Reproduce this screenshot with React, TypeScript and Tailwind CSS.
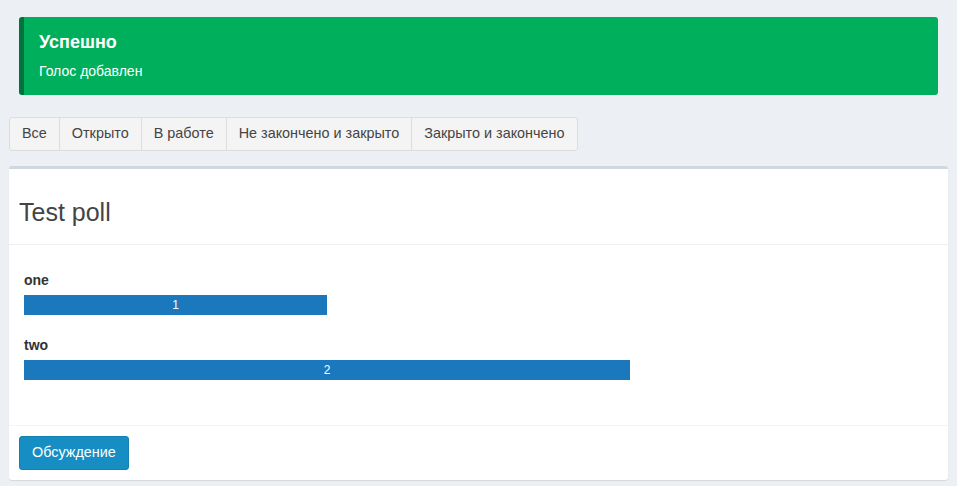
const tabs = ["Все", "Открыто", "В работе", "Не закончено и закрыто", "Закрыто и закончено"];

const answers = [
  { name: "one", votes: 1 },
  { name: "two", votes: 2 },
];

export default function App() {
  const total = 3;

  return (
    <div className="min-h-[486px] bg-[#ecf0f5] px-[9px] pt-[17px] font-['Liberation_Sans',Arial,sans-serif] text-[14px] text-[#333]">
      <div className="mx-[10px] h-[78px] rounded-[3px] border-l-[5px] border-[#00733e] bg-[#00af5b] pl-[15px] pt-[12px] text-white">
        <h4 className="text-[18px] font-bold leading-[26px]">Успешно</h4>
        <p className="mt-[6px] text-[14px] leading-[20px]">Голос добавлен</p>
      </div>

      <div className="mt-[22px] flex">
        {tabs.map((t, i) => (
          <button
            key={t}
            className={`h-[34px] border border-[#ddd] bg-[#f4f4f4] px-[12px] text-[14.4px] text-[#444] ${i > 0 ? "-ml-px" : ""} ${i === 0 ? "rounded-l-[3px]" : ""} ${i === tabs.length - 1 ? "rounded-r-[3px]" : ""}`}
          >
            {t}
          </button>
        ))}
      </div>

      <div className="mt-[15px] rounded-[3px] border-t-[3px] border-[#d2d6de] bg-white shadow-[0_1px_1px_rgba(0,0,0,0.1)]">
        <div className="h-[76px] border-b border-[#f0f0f0] px-[10px] pt-[30px]">
          <h3 className="text-[25px] leading-[26px] text-[#444]">Test poll</h3>
        </div>
        <div className="h-[180px] px-[15px] pt-[25px]">
          {answers.map((a, i) => (
            <div key={a.name} className={i > 0 ? "mt-[20px]" : ""}>
              <div className="text-[14px] font-bold leading-[20px] text-[#333]">{a.name}</div>
              <div className="mt-[5px] h-[20px] w-full">
                <div
                  className="flex h-[20px] items-center justify-center bg-[#1c78bd] text-[12px] text-white"
                  style={{ width: `${(a.votes / total) * 100}%` }}
                >
                  {a.votes}
                </div>
              </div>
            </div>
          ))}
        </div>
        <div className="border-t border-[#f4f4f4] px-[10px] pb-[10px] pt-[10px]">
          <button className="h-[34px] rounded-[3px] border border-[#1580b0] bg-[#168dc3] px-[12px] text-[14.4px] text-white">
            Обсуждение
          </button>
        </div>
      </div>
    </div>
  );
}
